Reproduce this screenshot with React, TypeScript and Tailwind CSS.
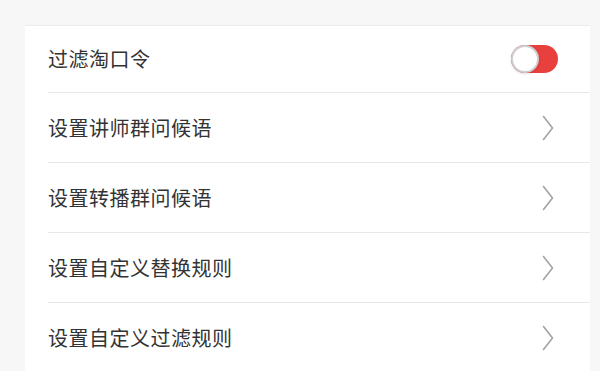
import { useState } from 'react';

const rows = ['设置讲师群问候语', '设置转播群问候语', '设置自定义替换规则', '设置自定义过滤规则'];

function Chevron() {
  return (
    <svg width="12" height="26" viewBox="0 0 12 26" fill="none" className="shrink-0">
      <path d="M1.5 1.5 L10.5 13 L1.5 24.5" stroke="#a3a3a3" strokeWidth="1.6" strokeLinecap="round" strokeLinejoin="round" />
    </svg>
  );
}

function Toggle({ on, onClick }: { on: boolean; onClick: () => void }) {
  return (
    <button
      type="button"
      onClick={onClick}
      className={`relative w-[47px] h-[28px] rounded-full cursor-pointer ${on ? 'bg-[#e8403c]' : 'bg-[#e5e5e5]'}`}
    >
      <span className="absolute left-0 top-0 w-[28px] h-[28px] rounded-full bg-white border-2 border-[#cfcfcf] shadow-sm" />
    </button>
  );
}

export default function App() {
  const [filter, setFilter] = useState(true);

  return (
    <div
      className="w-[600px] h-[371px] overflow-hidden bg-[#f7f7f7] pt-[25px] pl-[25px] pr-[10px]"
      style={{ fontFamily: '"Noto Sans CJK SC", "Noto Sans", sans-serif' }}
    >
      <div className="bg-white border-t border-[#ececec]">
        <div className="pl-[23px]">
          <div className="h-[67px] flex items-center justify-between pr-[32px] border-b border-[#e8e8e8]">
            <span className="text-[20px] text-[#333333] tracking-[0.5px]">过滤淘口令</span>
            <Toggle on={filter} onClick={() => setFilter(!filter)} />
          </div>
          {rows.map((label, i) => (
            <div
              key={label}
              className={`h-[70px] flex items-center justify-between pr-[36px] ${i < rows.length - 1 ? 'border-b border-[#e8e8e8]' : ''}`}
            >
              <span className="text-[20px] text-[#333333] tracking-[0.5px]">{label}</span>
              <Chevron />
            </div>
          ))}
        </div>
      </div>
    </div>
  );
}
